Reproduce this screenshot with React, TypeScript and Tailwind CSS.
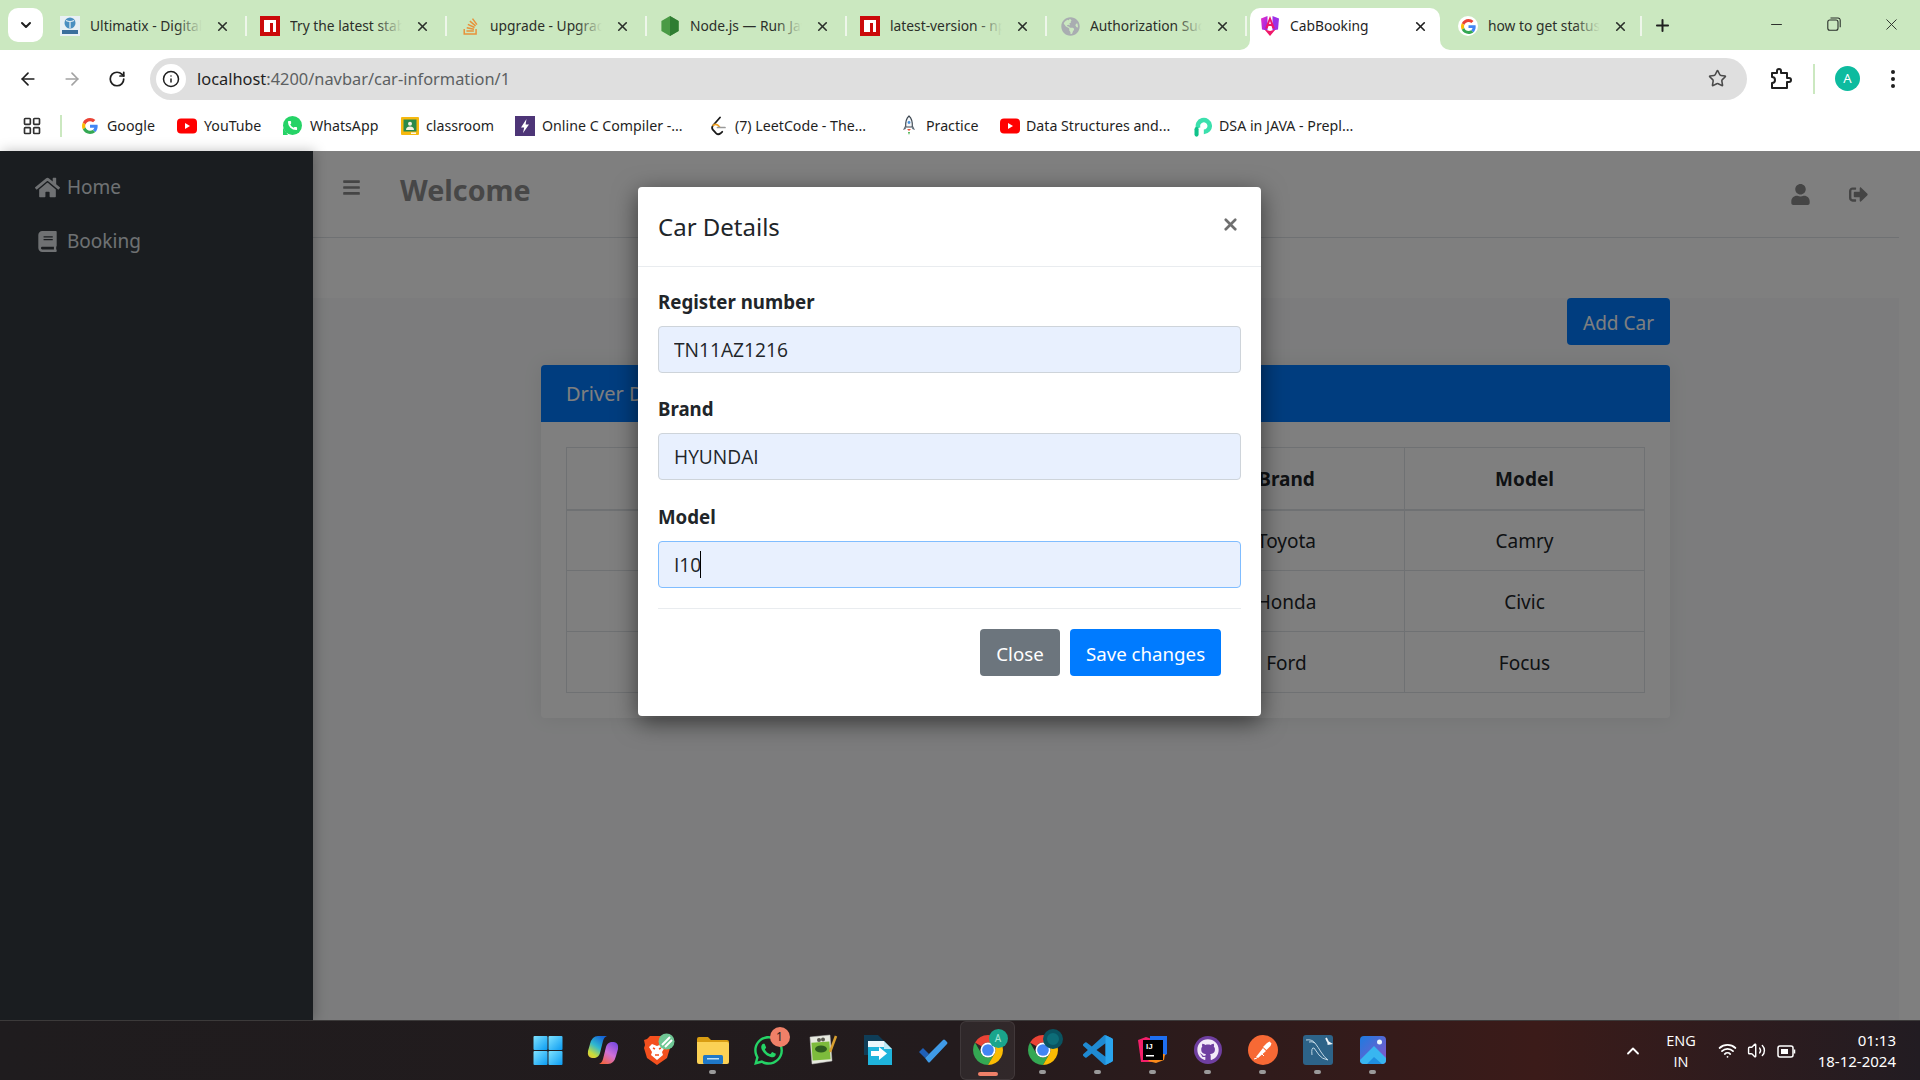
import { ArrowLeft, ArrowRight, ChevronDown, ChevronUp, Info, LayoutGrid, Minus, Phone, Plus, RotateCw, Star, Volume2, Wifi, X } from 'lucide-react'
import type { ReactNode } from 'react'
import { FaBars, FaBook, FaGithub, FaGlobeAmericas, FaHome, FaSignOutAlt, FaStackOverflow, FaUser, FaWhatsapp } from 'react-icons/fa'

function GoogleG({ size = 16 }: { size?: number }) {
  return (
    <svg width={size} height={size} viewBox="0 0 48 48">
      <path fill="#EA4335" d="M24 9.5c3.54 0 6.71 1.22 9.21 3.6l6.85-6.85C35.9 2.38 30.47 0 24 0 14.62 0 6.51 5.38 2.56 13.22l7.98 6.19C12.43 13.72 17.74 9.5 24 9.5z" />
      <path fill="#4285F4" d="M46.98 24.55c0-1.57-.15-3.09-.38-4.55H24v9.02h12.94c-.58 2.96-2.26 5.48-4.78 7.18l7.73 6c4.51-4.18 7.09-10.36 7.09-17.65z" />
      <path fill="#FBBC05" d="M10.53 28.59c-.48-1.45-.76-2.99-.76-4.59s.27-3.14.76-4.59l-7.98-6.19C.92 16.46 0 20.12 0 24c0 3.88.92 7.54 2.56 10.78l7.97-6.19z" />
      <path fill="#34A853" d="M24 48c6.48 0 11.93-2.13 15.89-5.81l-7.73-6c-2.15 1.45-4.92 2.3-8.16 2.3-6.26 0-11.57-4.22-13.47-9.91l-7.98 6.19C6.51 42.62 14.62 48 24 48z" />
    </svg>
  )
}

function Npm() {
  return (
    <svg width="20" height="20" viewBox="0 0 20 20">
      <rect width="20" height="20" fill="#cb0a0a" />
      <path fill="#fff" d="M4 4h12v12h-3V7h-3v9H4z" />
    </svg>
  )
}

function Tata() {
  return (
    <svg width="20" height="20" viewBox="0 0 20 20">
      <rect width="20" height="20" fill="#e8f0f4" />
      <circle cx="10" cy="7" r="5.5" fill="#4a8fc0" />
      <path d="M6 4.5q4 2 8 0M10 5v7" stroke="#e8f0f4" strokeWidth="1.2" fill="none" />
      <rect x="2" y="14" width="16" height="4" fill="#3b6f9c" />
    </svg>
  )
}

function NodeHex() {
  return (
    <svg width="20" height="20" viewBox="0 0 20 20">
      <path fill="#4a9a45" d="M10 0l8.6 5v10L10 20l-8.6-5V5z" />
      <path fill="#2f7d32" d="M10 0l8.6 5v10L10 20z" />
    </svg>
  )
}

function AngularShield() {
  return (
    <svg width="20" height="22" viewBox="0 0 20 22">
      <defs>
        <linearGradient id="ang" x1="0" y1="0" x2="1" y2="1">
          <stop offset="0" stopColor="#f02cc8" />
          <stop offset="1" stopColor="#8a2be8" />
        </linearGradient>
      </defs>
      <path fill="url(#ang)" d="M7.500 1L1 3.500l1 11 5.500 1z" />
      <path fill="#9b30e8" d="M12.500 1L19 3.500l-1 11-5.500 1z" />
      <path fill="#f0176a" d="M4.500 14.500L10 21l5.500-6.500-5.500 1.500z" />
      <path fill="#f0176a" d="M10 1L5 13.500h2.600l.9-2.400h3l.9 2.400H15zm0 5l.9 3H9.100z" />
    </svg>
  )
}

function Youtube() {
  return (
    <svg width="20" height="16" viewBox="0 0 20 16">
      <rect width="20" height="15" y="0.5" rx="4" fill="#f00" />
      <path d="M8 5l5 3-5 3z" fill="#fff" />
    </svg>
  )
}

function WhatsAppSolid() {
  return (
    <span className="relative block w-[19px] h-[19px]">
      <span className="absolute left-0 bottom-0 w-0 h-0 border-t-[7px] border-t-transparent border-l-[5px] border-l-[#25d366]" />
      <span className="absolute inset-0 rounded-full bg-[#25d366] flex items-center justify-center">
        <Phone size={11} fill="#fff" strokeWidth={0} />
      </span>
    </span>
  )
}

function Classroom() {
  return (
    <svg width="18" height="18" viewBox="0 0 18 18">
      <rect width="18" height="18" rx="1" fill="#f6b90f" />
      <rect x="2.5" y="2.5" width="13" height="12" fill="#2a8a4a" />
      <circle cx="9" cy="6.8" r="2" fill="#f2f2e0" />
      <path d="M5 13q0-3.5 4-3.5t4 3.5z" fill="#f2f2e0" />
      <rect x="10" y="15.5" width="5" height="1.4" fill="#fff" />
    </svg>
  )
}

function OnlineC() {
  return (
    <svg width="20" height="20" viewBox="0 0 20 20">
      <rect width="20" height="20" fill="#4d3577" />
      <path d="M11.5 3L6 11.5h3.2L8 17l6-8.5h-3.4z" fill="#fff" />
    </svg>
  )
}

function LeetCode() {
  return (
    <svg width="18" height="20" viewBox="0 0 18 20">
      <path d="M11 1.5L4 9.5c-1.2 1.5-1.2 3 0 4.4l3.2 3.4c1.300 1.300 3 1.200 4.400 0l1.600-1.500" fill="none" stroke="#1a1a1a" strokeWidth="1.800" strokeLinecap="round" />
      <path d="M4 9.500c1.300-1.300 3-1.500 4.500-.5l2 1.800" fill="none" stroke="#f0a020" strokeWidth="1.600" strokeLinecap="round" />
      <path d="M8.500 11.500h7.500" stroke="#9a9a9a" strokeWidth="1.700" strokeLinecap="round" />
    </svg>
  )
}

function Rocket() {
  return (
    <svg width="16" height="22" viewBox="0 0 16 22">
      <path d="M8 1c3 2.500 3.600 6 3.300 11H4.700C4.400 7 5 3.500 8 1z" fill="#f4f6f8" stroke="#3c4650" strokeWidth="1.200" />
      <circle cx="8" cy="7.500" r="1.400" fill="#4a90d9" />
      <path d="M4.500 10L2 15l2.800-1M11.500 10L14 15l-2.800-1" fill="#5a6672" />
      <path d="M6 14h4l-2 2z" fill="#e8503a" />
      <path d="M7 17h2l-1 3z" fill="#3fae49" />
    </svg>
  )
}

function Prepl() {
  return (
    <svg width="22" height="25" viewBox="0 0 22 25">
      <path d="M7 15.500a6.500 6.500 0 1 1 6 4" fill="none" stroke="#3be0ad" strokeWidth="5" />
      <path d="M5 22.500v-6" stroke="#10c28a" strokeWidth="4.500" strokeLinecap="round" />
    </svg>
  )
}

function Chrome({ size = 30 }: { size?: number }) {
  return (
    <svg width={size} height={size} viewBox="2 2 20 20">
      <path fill="#ea4335" d="M12 2a10 10 0 0 1 8.660 5H12a5 5 0 0 0-4.330 2.500L3.340 7A10 10 0 0 1 12 2z" />
      <path fill="#34a853" d="M3.340 7l4.330 7.500a5 5 0 0 0 8.660 0L12 22A10 10 0 0 1 3.340 7z" />
      <path fill="#fbbc04" d="M20.660 7A10 10 0 0 1 12 22l4.330-7.500A5 5 0 0 0 12 7z" />
      <circle cx="12" cy="12" r="5" fill="#fff" />
      <circle cx="12" cy="12" r="3.900" fill="#4285f4" />
    </svg>
  )
}

function WinLogo() {
  return (
    <svg width="30" height="30" viewBox="0 0 30 30">
      <defs>
        <linearGradient id="win" x1="0" y1="0" x2="1" y2="1">
          <stop offset="0" stopColor="#7fe3ff" />
          <stop offset="1" stopColor="#0a9bf2" />
        </linearGradient>
      </defs>
      <rect x="0.500" y="1" width="14" height="14" rx="1" fill="url(#win)" />
      <rect x="15.500" y="1" width="14" height="14" rx="1" fill="url(#win)" />
      <rect x="0.500" y="16" width="14" height="14" rx="1" fill="url(#win)" />
      <rect x="15.500" y="16" width="14" height="14" rx="1" fill="url(#win)" />
    </svg>
  )
}

function Copilot() {
  return (
    <svg width="32" height="30" viewBox="0 0 32 30">
      <defs>
        <linearGradient id="copL" x1="0.700" y1="0" x2="0.100" y2="1">
          <stop offset="0" stopColor="#1565d8" />
          <stop offset="0.450" stopColor="#2fb8d0" />
          <stop offset="0.800" stopColor="#c8dc3a" />
          <stop offset="1" stopColor="#e8c83a" />
        </linearGradient>
        <linearGradient id="copR" x1="0.800" y1="0" x2="0.200" y2="1">
          <stop offset="0" stopColor="#7a4ae0" />
          <stop offset="0.500" stopColor="#d070d8" />
          <stop offset="1" stopColor="#f4643c" />
        </linearGradient>
      </defs>
      <path d="M11 1h9q-3 1-4 5l-3 12q-1 4-5 5H5q-5-1-4-7l2-7q2-8 8-8z" fill="url(#copL)" />
      <path d="M21 29h-9q3-1 4-5l3-12q1-4 5-5h3q5 1 4 7l-2 7q-2 8-8 8z" fill="url(#copR)" />
    </svg>
  )
}

function Brave() {
  return (
    <div className="relative w-[30px] h-[32px]">
      <svg width="28" height="32" viewBox="0 0 28 32">
        <path d="M7 2h14l3 3 3 1-1 5 1 3-3 10-10 7-10-7-3-10 1-3-1-5 3-1z" fill="#f4501e" />
        <path d="M9 10l5 2 5-2 3 3-3 5 1 3-6 5-6-5 1-3-3-5z" fill="#fff" />
        <path d="M10 14l2 1M18 14l-2 1M12 21h4" stroke="#f4501e" strokeWidth="1.500" />
      </svg>
      <svg className="absolute -top-[1px] -right-[2px]" width="17" height="17" viewBox="0 0 17 17">
        <circle cx="8.500" cy="8.500" r="8" fill="#6fc795" />
        <path d="M4 12l8-8M7 14l7-7" stroke="#fff" strokeWidth="2" />
      </svg>
    </div>
  )
}

function Folder() {
  return (
    <svg width="32" height="28" viewBox="0 0 32 28">
      <path d="M0 3a2 2 0 0 1 2-2h9l3 3h16a2 2 0 0 1 2 2v4H0z" fill="#d99d12" />
      <path d="M0 6h30a2 2 0 0 1 2 2v18a2 2 0 0 1-2 2H2a2 2 0 0 1-2-2z" fill="#fbd155" />
      <rect x="6" y="19" width="20" height="9" rx="1.500" fill="#1f78c8" />
      <rect x="10" y="22" width="12" height="1.500" fill="#bfe0f5" />
    </svg>
  )
}

function Notepad() {
  return (
    <svg width="30" height="32" viewBox="0 0 30 32">
      <path d="M2 3l20-2 2 26-20 3z" fill="#e8eae0" stroke="#bbb" strokeWidth="0.500" />
      <rect x="4" y="8" width="18" height="18" fill="#7dbb3c" transform="rotate(-4 13 17)" />
      <ellipse cx="13" cy="15" rx="6" ry="3.500" fill="#2f5d20" />
      <circle cx="11" cy="6" r="2" fill="#5a5a50" />
      <circle cx="15" cy="5.500" r="2" fill="#5a5a50" />
      <path d="M22 18L28 2" stroke="#d9a030" strokeWidth="2.500" />
    </svg>
  )
}

function ShareDoc() {
  return (
    <svg width="28" height="30" viewBox="0 0 28 30">
      <path d="M0 0h14l6 6v14H0z" fill="#0f3d57" />
      <path d="M4 6h16l8 8v16H4z" fill="#1fb4dc" />
      <path d="M20 6l8 8h-8z" fill="#fff" opacity="0.700" />
      <path d="M4 6h10l6 0v6L4 12z" fill="#eaf6fb" />
      <path d="M7 16h8v-4l8 6.500-8 6.500v-4H7z" fill="#fff" />
    </svg>
  )
}

function TodoCheck() {
  return (
    <svg width="30" height="26" viewBox="0 0 30 26">
      <path d="M1 15l4-4 6 6-4 4z" fill="#1f60b8" />
      <path d="M7 21l18-18q1-1 2 0l2 2q1 1 0 2L12 25q-1 1-2 0z" fill="#3f9be8" />
    </svg>
  )
}

function VsCode() {
  return (
    <svg width="30" height="30" viewBox="0 0 24 24">
      <path fill="#1f8ad2" d="M23.150 2.587L18.210.210a1.494 1.494 0 0 0-1.705.290l-9.460 8.630-4.120-3.128a.999.999 0 0 0-1.276.057L.327 7.261A1 1 0 0 0 .326 8.740L3.899 12 .326 15.260a1 1 0 0 0 .001 1.479L1.650 17.940a.999.999 0 0 0 1.276.057l4.120-3.128 9.460 8.630a1.492 1.492 0 0 0 1.704.290l4.942-2.377A1.500 1.500 0 0 0 24 20.060V3.939a1.500 1.500 0 0 0-.850-1.352zm-5.146 14.861L10.826 12l7.178-5.448v10.896z" />
      <path fill="#2aa5ee" d="M18.004 0.100l5.146 2.487A1.500 1.500 0 0 1 24 3.939V20.060a1.500 1.500 0 0 1-.850 1.352l-5.146 2.490z" />
    </svg>
  )
}

function IntelliJ() {
  return (
    <svg width="30" height="32" viewBox="0 0 30 32">
      <path d="M0 6l8-3 6 2v23L3 28z" fill="#f41f6a" />
      <path d="M12 2h17v18l-6 4-11-4z" fill="#1e6ff0" />
      <path d="M18 20h9l-1 6-8 3-8-2z" fill="#f98a1a" />
      <rect x="5" y="6" width="20" height="20" fill="#000" />
      <text x="8" y="15" fill="#fff" fontSize="8" fontWeight="700" fontFamily="Liberation Sans, sans-serif">IJ</text>
      <rect x="8" y="21" width="8" height="1.500" fill="#fff" />
    </svg>
  )
}

function Postman() {
  return (
    <svg width="30" height="30" viewBox="0 0 30 30">
      <circle cx="15" cy="15" r="15" fill="#f76935" />
      <path d="M8 22l7-9 3 3-8 7zM15 12l4-4 2.500-1.500 2 2-1 2.500-4 4z" fill="#fff" />
      <path d="M6 24l3-1M13 18l3 3" stroke="#fff" strokeWidth="1" />
    </svg>
  )
}

function Mysql() {
  return (
    <svg width="30" height="30" viewBox="0 0 30 30">
      <rect width="30" height="30" rx="3" fill="#2d6388" />
      <path d="M3 5q6-1 9 3t6 9 7 8q-6-1-9-5l-5-7q-3-1-2 7M12 8q-3-2-6-1" fill="none" stroke="#c0d6e4" strokeWidth="1" />
      <path d="M23 3l2 4 2.500 1.500-3 .5" fill="none" stroke="#eef4f8" strokeWidth="1.800" />
    </svg>
  )
}

function Photos() {
  return (
    <svg width="26" height="28" viewBox="0 0 26 28">
      <defs>
        <linearGradient id="ph" x1="0" y1="0" x2="1" y2="1">
          <stop offset="0" stopColor="#1c7ce0" />
          <stop offset="1" stopColor="#8a55c8" />
        </linearGradient>
      </defs>
      <rect width="26" height="28" rx="4" fill="url(#ph)" />
      <circle cx="19.500" cy="6" r="2.500" fill="#eaf6fd" />
      <path d="M0 24q0 4 4 4h18q4 0 4-4v-2L14 10z" fill="#38b6f0" />
      <path d="M7 28l7-7 8 7z" fill="#1f8ee0" />
    </svg>
  )
}

const tabs = [
  { title: 'Ultimatix - Digital Workplace', icon: <Tata /> },
  { title: 'Try the latest stable version', icon: <Npm /> },
  { title: 'upgrade - Upgrade Node', icon: <FaStackOverflow className="text-[#e8913a]" size={19} /> },
  { title: 'Node.js — Run JavaScript', icon: <NodeHex /> },
  { title: 'latest-version - npm', icon: <Npm /> },
  { title: 'Authorization Success', icon: <FaGlobeAmericas className="text-[#a9adb1]" size={19} /> },
]

function Tab({ title, icon, className = '' }: { title: string; icon: ReactNode; className?: string }) {
  return (
    <div className={`relative flex items-center w-[200px] h-full pl-[10px] ${className}`}>
      <span className="w-5 h-5 flex items-center justify-center shrink-0">{icon}</span>
      <div className="relative ml-[10px] w-[112px] overflow-hidden whitespace-nowrap text-[13.8px] text-[#2b2f2a]">
        {title}
        <span className="absolute right-0 top-0 bottom-0 w-[26px] bg-linear-to-r from-transparent to-[#cbe8c0]" />
      </div>
      <X size={15} strokeWidth={2.6} className="ml-[13px] text-[#2a2f2a] shrink-0" />
      <span className="absolute right-[3px] top-[8px] w-[2px] h-[20px] bg-[#eef6ea]" />
    </div>
  )
}

function TabStrip() {
  return (
    <div className="flex items-start h-[50px] bg-[#cbe8c0]">
      <div className="ml-2 mt-2 w-[35px] h-[34px] bg-white rounded-[10px] flex items-center justify-center shrink-0">
        <ChevronDown size={16} strokeWidth={3} className="text-[#1f1f1f]" />
      </div>
      <div className="flex ml-[7px] mt-[8px] h-[36px]">
        {tabs.map((t) => (
          <Tab key={t.title} title={t.title} icon={t.icon} />
        ))}
        <div className="relative flex items-center w-[190px] h-[42px] pl-[10px] bg-white rounded-t-[10px]">
          <span className="absolute -left-[10px] bottom-0 w-[10px] h-[10px] bg-white">
            <span className="block w-full h-full bg-[#cbe8c0] rounded-br-[10px]" />
          </span>
          <span className="absolute -right-[10px] bottom-0 w-[10px] h-[10px] bg-white">
            <span className="block w-full h-full bg-[#cbe8c0] rounded-bl-[10px]" />
          </span>
          <span className="mb-[6px]"><AngularShield /></span>
          <span className="mb-[6px] ml-[10px] w-[112px] text-[13.8px] text-[#1f1f1f] whitespace-nowrap">CabBooking</span>
          <X size={15} strokeWidth={2.6} className="mb-[6px] ml-[11px] text-[#1f1f1f] shrink-0" />
        </div>
        <Tab title="how to get status code" icon={<span className="w-5 h-5 rounded-full bg-white flex items-center justify-center"><GoogleG size={15} /></span>} className="ml-[8px] !w-[197px]" />
      </div>
      <Plus size={19} strokeWidth={2.5} className="ml-[8px] mt-[16px] text-[#1f1f1f]" />
      <div className="ml-auto flex h-[50px] text-[#2a2f2a]">
        <div className="w-[57px] flex items-center justify-center pb-[2px]"><Minus size={17} strokeWidth={1.4} /></div>
        <div className="w-[57px] flex items-center justify-center pb-[2px]">
          <svg width="14" height="14" viewBox="0 0 14 14" fill="none" stroke="currentColor" strokeWidth="1.100">
            <rect x="0.800" y="3" width="10.200" height="10.200" rx="2" />
            <path d="M3.500 1h7.500a2.200 2.200 0 0 1 2.200 2.200v7" />
          </svg>
        </div>
        <div className="w-[58px] flex items-center justify-center pb-[2px]"><X size={19} strokeWidth={1.2} /></div>
      </div>
    </div>
  )
}

function Toolbar() {
  return (
    <div className="flex items-center h-[58px] bg-white pl-[6px] pb-[1px]">
      <div className="w-[44px] flex justify-center"><ArrowLeft size={20} strokeWidth={2} className="text-[#1f1f1f]" /></div>
      <div className="w-[44px] flex justify-center"><ArrowRight size={20} strokeWidth={2} className="text-[#a3a3a3]" /></div>
      <div className="w-[45px] flex justify-center pl-[1px]"><RotateCw size={18} strokeWidth={2.3} className="text-[#1f1f1f]" /></div>
      <div className="ml-[11px] flex items-center w-[1597px] h-[42px] rounded-full bg-[#dfdfdf] pl-[6px] pr-[20px]">
        <span className="w-[30px] h-[30px] rounded-full bg-white flex items-center justify-center">
          <Info size={18} strokeWidth={2} className="text-[#1f1f1f]" />
        </span>
        <span className="ml-[11px] pt-[2px] text-[16.4px] text-[#5c5f62]"><span className="text-[#1f1f1f]">localhost</span>:4200/navbar/car-information/1</span>
        <Star size={19} strokeWidth={2} className="ml-auto text-[#4a4a4a]" />
      </div>
      <svg className="ml-[23px]" width="22" height="22" viewBox="0 0 22 22" fill="none" stroke="#1f1f1f" strokeWidth="2" strokeLinejoin="round">
        <path d="M2 5h5V3a2 2 0 0 1 4 0v2h6v5h2a2 2 0 0 1 0 4h-2v6H2v-5a3 3 0 0 0 0-6z" />
      </svg>
      <span className="ml-[21px] w-[2px] h-[30px] bg-[#cbe8c0]" />
      <span className="ml-[20px] w-[25px] h-[25px] rounded-full bg-[#0dbb9f] text-white text-[13px] flex items-center justify-center">A</span>
      <span className="ml-[31px] flex flex-col gap-[3px]">
        <span className="w-[4px] h-[4px] rounded-full bg-[#1f1f1f]" />
        <span className="w-[4px] h-[4px] rounded-full bg-[#1f1f1f]" />
        <span className="w-[4px] h-[4px] rounded-full bg-[#1f1f1f]" />
      </span>
    </div>
  )
}

function Bookmark({ icon, label, width, gap }: { icon: ReactNode; label: string; width: string; gap: string }) {
  return (
    <div className={`flex items-center shrink-0 ${width}`}>
      <span className="w-5 h-5 flex items-center justify-center shrink-0">{icon}</span>
      <span className={`${gap} text-[14.2px] text-[#1f1f1f] whitespace-nowrap`}>{label}</span>
    </div>
  )
}

function BookmarkBar() {
  return (
    <div className="flex items-center h-[43px] pb-[7px] bg-white">
      <LayoutGrid size={20} strokeWidth={2} className="ml-[22px] text-[#303030]" />
      <span className="ml-[18px] w-[2px] h-[22px] bg-[#cbe8c0]" />
      <div className="flex ml-[18px]">
        <Bookmark icon={<GoogleG />} label="Google" width="w-[97px]" gap="ml-[7px]" />
        <Bookmark icon={<Youtube />} label="YouTube" width="w-[105px]" gap="ml-[7px]" />
        <Bookmark icon={<WhatsAppSolid />} label="WhatsApp" width="w-[118px]" gap="ml-[8px]" />
        <Bookmark icon={<Classroom />} label="classroom" width="w-[115px]" gap="ml-[6px]" />
        <Bookmark icon={<OnlineC />} label="Online C Compiler -..." width="w-[193px]" gap="ml-[7px]" />
        <Bookmark icon={<LeetCode />} label="(7) LeetCode - The..." width="w-[191px]" gap="ml-[7px]" />
        <Bookmark icon={<Rocket />} label="Practice" width="w-[101px]" gap="ml-[7px]" />
        <Bookmark icon={<Youtube />} label="Data Structures and..." width="w-[192px]" gap="ml-[6px]" />
        <Bookmark icon={<Prepl />} label="DSA in JAVA - Prepl..." width="w-[200px]" gap="ml-[7px]" />
      </div>
    </div>
  )
}

function Sidebar() {
  return (
    <aside className="relative z-10 w-[313px] shrink-0 bg-[#343a40] text-[#dee2e6] shadow-[2px_0_12px_rgba(0,0,0,0.25)] pt-[16px] text-[19px]">
      <div className="flex items-center h-[40px] pl-[35px]">
        <FaHome size={25} />
        <span className="ml-[7px]">Home</span>
      </div>
      <div className="flex items-center h-[40px] mt-[14px] pl-[37px]">
        <FaBook size={21} />
        <span className="ml-[9px]">Booking</span>
      </div>
    </aside>
  )
}

const rows = [
  { brand: 'Toyota', model: 'Camry' },
  { brand: 'Honda', model: 'Civic' },
  { brand: 'Ford', model: 'Focus' },
]

function CarTable() {
  return (
    <table className="w-[1078px] table-fixed border-collapse text-center text-[19px] text-[#212529]">
      <colgroup>
        <col className="w-[301px]" />
        <col className="w-[301px]" />
        <col className="w-[236px]" />
        <col className="w-[240px]" />
      </colgroup>
      <thead>
        <tr className="h-[62px] border-b-2 border-[#dee2e6]">
          <th className="border border-[#dee2e6] pt-[2px] font-bold">Car Id</th>
          <th className="border border-[#dee2e6] pt-[2px] font-bold">Register number</th>
          <th className="border border-[#dee2e6] pt-[2px] font-bold">Brand</th>
          <th className="border border-[#dee2e6] pt-[2px] font-bold">Model</th>
        </tr>
      </thead>
      <tbody>
        {rows.map((r, i) => (
          <tr key={r.brand} className="h-[61px]">
            <td className="border border-[#dee2e6] pt-[2px]">{i + 1}</td>
            <td className="border border-[#dee2e6] pt-[2px]" />
            <td className="border border-[#dee2e6] pt-[2px]">{r.brand}</td>
            <td className="border border-[#dee2e6] pt-[2px]">{r.model}</td>
          </tr>
        ))}
      </tbody>
    </table>
  )
}

function PageBody() {
  return (
    <div className="flex-1 min-w-0 bg-white">
      <header className="flex items-center h-[87px] w-[1586px] border-b border-[#dee2e6] pl-[29px] pb-[8px] text-[#8a8a8a]">
        <FaBars size={19} className="mb-[5px]" />
        <h1 className="ml-[39px] text-[28.7px] font-bold text-[#8f8f8f]">Welcome</h1>
        <FaUser size={21} className="ml-auto mt-[8px]" />
        <FaSignOutAlt size={19} className="ml-[38px] mr-[31px] mt-[8px]" />
      </header>
      <div className="h-[60px] w-[1586px] bg-white" />
      <div className="w-[1586px] h-[722px] bg-[#f8f9fa] pl-[228px] pr-[229px]">
        <div className="flex justify-end">
          <button className="w-[103px] h-[47px] pt-[3px] rounded bg-[#007bff] text-white text-[19px]">Add Car</button>
        </div>
        <div className="mt-[20px] h-[353px] rounded bg-white shadow-[0_0_20px_rgba(0,0,0,0.08)]">
          <div className="flex items-center h-[57px] pl-[25px] rounded-t bg-[#007bff] text-white text-[20px]">Driver Details</div>
          <div className="pt-[25px] pl-[25px]">
            <CarTable />
          </div>
        </div>
      </div>
    </div>
  )
}

function Field({ label, value, focused = false, className = '' }: { label: string; value: string; focused?: boolean; className?: string }) {
  return (
    <div className={className}>
      <label className="block h-[30px] leading-[30px] text-[18.7px] font-bold text-[#212529]">{label}</label>
      <div className="relative mt-[9px]">
        <input
          readOnly
          value={value}
          className={`block w-[583px] h-[47px] px-[15px] rounded bg-[#e8f0fe] border font-['Open_Sans',sans-serif] text-[19.2px] text-[#212529] outline-none ${focused ? 'border-[#80bdff]' : 'border-[#ced4da]'}`}
        />
        {focused && <span className="absolute left-[42px] top-[10px] w-[1px] h-[27px] bg-black" />}
      </div>
    </div>
  )
}

function CarModal() {
  return (
    <div className="absolute left-[638px] top-[36px] w-[623px] h-[529px] rounded bg-white shadow-[0_6px_24px_rgba(0,0,0,0.55)]">
      <div className="flex items-center h-[80px] border-b border-[#e9ecef] pl-[20px] pr-[21px]">
        <h5 className="text-[24px] text-[#212529]">Car Details</h5>
        <X size={19} strokeWidth={3.4} className="ml-auto mb-[4px] text-[#6f6f6f]" />
      </div>
      <div className="pt-[20px] px-[20px]">
        <Field label="Register number" value="TN11AZ1216" />
        <Field label="Brand" value="HYUNDAI" className="mt-[21px]" />
        <Field label="Model" value="I10" focused className="mt-[22px]" />
        <div className="mt-[20px] border-t border-[#e9ecef] pt-[20px] pr-[20px] flex justify-end gap-[10px]">
          <button className="w-[80px] h-[47px] pt-[3px] rounded bg-[#6c757d] text-white text-[18.7px]">Close</button>
          <button className="w-[151px] h-[47px] pt-[3px] rounded bg-[#007bff] text-white text-[18.7px]">Save changes</button>
        </div>
      </div>
    </div>
  )
}

const dockIcons = [
  { id: 'win', icon: <WinLogo /> },
  { id: 'copilot', icon: <Copilot /> },
  { id: 'brave', icon: <Brave /> },
  { id: 'files', icon: <Folder />, dot: true },
  {
    id: 'whatsapp',
    icon: (
      <span className="relative block w-[32px] h-[32px]">
        <FaWhatsapp size={33} className="text-[#25d366]" />
        <span className="absolute -top-[7px] -right-[6px] w-5 h-5 rounded-full bg-[#f08068] text-[#222] text-[12px] flex items-center justify-center">1</span>
      </span>
    ),
  },
  { id: 'notepad', icon: <Notepad /> },
  { id: 'share', icon: <ShareDoc /> },
  { id: 'todo', icon: <TodoCheck /> },
  {
    id: 'chrome',
    active: true,
    icon: (
      <span className="relative block w-[30px] h-[30px]">
        <Chrome />
        <span className="absolute -top-[6px] -right-[5px] w-[19px] h-[19px] rounded-full bg-[#1aa58c] text-[#a8e8da] text-[10px] flex items-center justify-center">A</span>
      </span>
    ),
  },
  {
    id: 'chrome2',
    dot: true,
    icon: (
      <span className="relative block w-[30px] h-[30px]">
        <Chrome />
        <span className="absolute -top-[6px] -right-[5px] w-[20px] h-[20px] rounded-full bg-[#0d6d78] border-[4px] border-[#0a5360]" />
      </span>
    ),
  },
  { id: 'vscode', icon: <VsCode />, dot: true },
  { id: 'intellij', icon: <IntelliJ />, dot: true },
  {
    id: 'github',
    dot: true,
    icon: (
      <span className="w-[28px] h-[28px] rounded-full bg-[#6f3fa0] flex items-center justify-center">
        <FaGithub size={22} className="text-[#f2eaf8]" />
      </span>
    ),
  },
  { id: 'postman', icon: <Postman />, dot: true },
  { id: 'mysql', icon: <Mysql />, dot: true },
  { id: 'photos', icon: <Photos />, dot: true },
]

function Taskbar() {
  return (
    <div className="relative z-30 flex items-center h-[60px] border-t border-[#3c3a3a] bg-[linear-gradient(90deg,#1f1c1e_0%,#231b1d_50%,#3b1b19_80%,#221c22_100%)]">
      <div className="flex ml-[520px] h-full">
        {dockIcons.map((d) => (
          <div key={d.id} className={`relative flex items-center justify-center w-[55px] h-full pb-[1px] ${d.active ? 'bg-[#ffffff0f] rounded-md border border-[#ffffff14]' : ''}`}>
            {d.icon}
            {d.dot && <span className="absolute bottom-[6px] w-[7px] h-[4px] rounded-full bg-[#9a9a9a]" />}
            {d.active && <span className="absolute bottom-[3px] w-[20px] h-[4px] rounded-full bg-[#f08068]" />}
          </div>
        ))}
      </div>
      <ChevronUp size={20} strokeWidth={2.2} className="ml-[223px] text-white" />
      <div className="ml-[18px] w-[40px] flex flex-col items-center text-[14.5px] leading-[21px] text-white font-['Open_Sans',sans-serif]">
        <span>ENG</span>
        <span>IN</span>
      </div>
      <Wifi size={19} strokeWidth={2.2} className="ml-[17px] text-white" />
      <Volume2 size={19} strokeWidth={1.8} className="ml-[10px] text-white" />
      <svg className="ml-[11px]" width="20" height="18" viewBox="0 0 20 18" fill="none" stroke="#fff" strokeWidth="1.500">
        <rect x="1" y="4" width="15" height="11" rx="2" />
        <rect x="4" y="7" width="7" height="5" fill="#fff" stroke="none" />
        <path d="M17.500 7.500v4" />
      </svg>
      <div className="ml-auto mr-[24px] flex flex-col items-end text-[15px] leading-[21px] text-white">
        <span>01:13</span>
        <span>18-12-2024</span>
      </div>
    </div>
  )
}

export default function App() {
  return (
    <div className="flex flex-col h-screen overflow-hidden font-['Noto_Sans',sans-serif] bg-[#cbe8c0]">
      <TabStrip />
      <div className="bg-white rounded-t-[10px]">
        <Toolbar />
        <BookmarkBar />
      </div>
      <main className="relative flex flex-1 min-h-0 bg-white">
        <Sidebar />
        <PageBody />
        <div className="absolute inset-0 z-20 bg-black/50" />
        <div className="absolute inset-0 z-20">
          <CarModal />
        </div>
      </main>
      <Taskbar />
    </div>
  )
}
